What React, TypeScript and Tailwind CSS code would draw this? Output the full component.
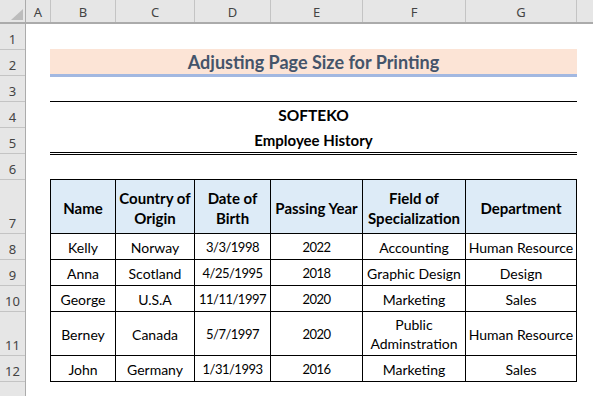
import React from "react";

const CELL_FONT = { fontFamily: 'Lato, "Liberation Sans", sans-serif' };
const UI_FONT = { fontFamily: '"Noto Sans", "Open Sans", sans-serif' };

const colHeaders: { l: string; c: string }[] = [
  { l: "A", c: "w-[25px]" },
  { l: "B", c: "w-[65px]" },
  { l: "C", c: "w-[79px]" },
  { l: "D", c: "w-[76px]" },
  { l: "E", c: "w-[92px]" },
  { l: "F", c: "w-[103px]" },
  { l: "G", c: "w-[111px]" },
];

const rowHeaders: { n: string; c: string }[] = [
  { n: "1", c: "h-[26px]" },
  { n: "2", c: "h-[26px]" },
  { n: "3", c: "h-[26px]" },
  { n: "4", c: "h-[26px]" },
  { n: "5", c: "h-[26px]" },
  { n: "6", c: "h-[26px]" },
  { n: "7", c: "h-[54px]" },
  { n: "8", c: "h-[26px]" },
  { n: "9", c: "h-[26px]" },
  { n: "10", c: "h-[26px]" },
  { n: "11", c: "h-[44px]" },
  { n: "12", c: "h-[26px]" },
  { n: "", c: "h-[26px]" },
];

const headers = [
  ["Name"],
  ["Country of", "Origin"],
  ["Date of", "Birth"],
  ["Passing Year"],
  ["Field of", "Specialization"],
  ["Department"],
];

const rows: string[][][] = [
  [["Kelly"], ["Norway"], ["3/3/1998"], ["2022"], ["Accounting"], ["Human Resource"]],
  [["Anna"], ["Scotland"], ["4/25/1995"], ["2018"], ["Graphic Design"], ["Design"]],
  [["George"], ["U.S.A"], ["11/11/1997"], ["2020"], ["Marketing"], ["Sales"]],
  [["Berney"], ["Canada"], ["5/7/1997"], ["2020"], ["Public", "Adminstration"], ["Human Resource"]],
  [["John"], ["Germany"], ["1/31/1993"], ["2016"], ["Marketing"], ["Sales"]],
];

export default function App() {
  return (
    <div className="w-[593px] h-[396px] overflow-hidden bg-white flex flex-col">
      {/* column header bar */}
      <div className="flex h-[24px] shrink-0 bg-[#e6e6e6] border-b-2 border-[#ababab]" style={UI_FONT}>
        <div className="w-[26px] shrink-0 border-r border-[#ababab] relative">
          <svg className="absolute left-[11px] top-[9px]" width="12" height="11" viewBox="0 0 12 11">
            <polygon points="12,0 12,11 0,11" fill="#bcbcbc" />
          </svg>
        </div>
        {colHeaders.map((h) => (
          <div
            key={h.l}
            className={`${h.c} shrink-0 border-r border-[#c4c4c4] flex items-center justify-center pt-[3px] text-[13px] text-[#444444]`}
          >
            {h.l}
          </div>
        ))}
        <div className="flex-1" />
      </div>

      <div className="flex flex-1">
        {/* row headers */}
        <div className="w-[26px] shrink-0 flex flex-col bg-[#e6e6e6] border-r border-[#ababab]" style={UI_FONT}>
          {rowHeaders.map((r, i) => (
            <div
              key={i}
              className={`${r.c} shrink-0 border-b border-[#c4c4c4] flex items-end justify-center pb-[3px] text-[13px] leading-none text-[#444444]`}
            >
              {r.n}
            </div>
          ))}
        </div>

        {/* sheet content */}
        <div className="flex-1 flex flex-col pl-[24px]" style={CELL_FONT}>
          <div className="h-[25px] shrink-0" />
          <div className="w-[527px] h-[28px] shrink-0 bg-[#fce4d6] border-b-[3px] border-[#a2b8e1] flex items-center justify-center pt-[2px] text-[18px] font-bold text-[#44546a]">
            Adjusting Page Size for Printing
          </div>
          <div className="h-[24px] shrink-0" />
          <div className="w-[527px] h-[27px] shrink-0 border-t border-black flex items-center justify-center pt-[1px] text-[15.5px] font-bold text-black">
            SOFTEKO
          </div>
          <div className="w-[527px] h-[27px] shrink-0 border-b-[3px] border-double border-black flex items-center justify-center pt-[1px] text-[15px] font-bold text-black">
            Employee History
          </div>
          <div className="h-[24px] shrink-0" />

          <div className="w-[527px] grid grid-cols-[64px_78px_75px_91px_102px_110px] grid-rows-[53px_25px_25px_25px_43px_25px] gap-px bg-black border border-black">
            {headers.map((h, i) => (
              <div
                key={`h${i}`}
                className="bg-[#ddebf7] flex flex-col items-center justify-center text-[15px] leading-[20px] font-bold text-black pt-[2px]"
              >
                {h.map((t) => (
                  <span key={t} className="whitespace-nowrap">{t}</span>
                ))}
              </div>
            ))}
            {rows.map((r, ri) =>
              r.map((c, ci) => {
                const numeric = ci === 2 || ci === 3;
                return (
                  <div
                    key={`${ri}-${ci}`}
                    className={
                      numeric
                        ? "bg-white flex flex-col items-center justify-center text-[13px] tracking-[-0.5px] leading-[19px] text-black pt-[1px]"
                        : "bg-white flex flex-col items-center justify-center text-[14px] leading-[19px] text-black pt-[1px]"
                    }
                  >
                    {c.map((t) => (
                      <span key={t} className="whitespace-nowrap">{t}</span>
                    ))}
                  </div>
                );
              })
            )}
          </div>
        </div>
      </div>
    </div>
  );
}
